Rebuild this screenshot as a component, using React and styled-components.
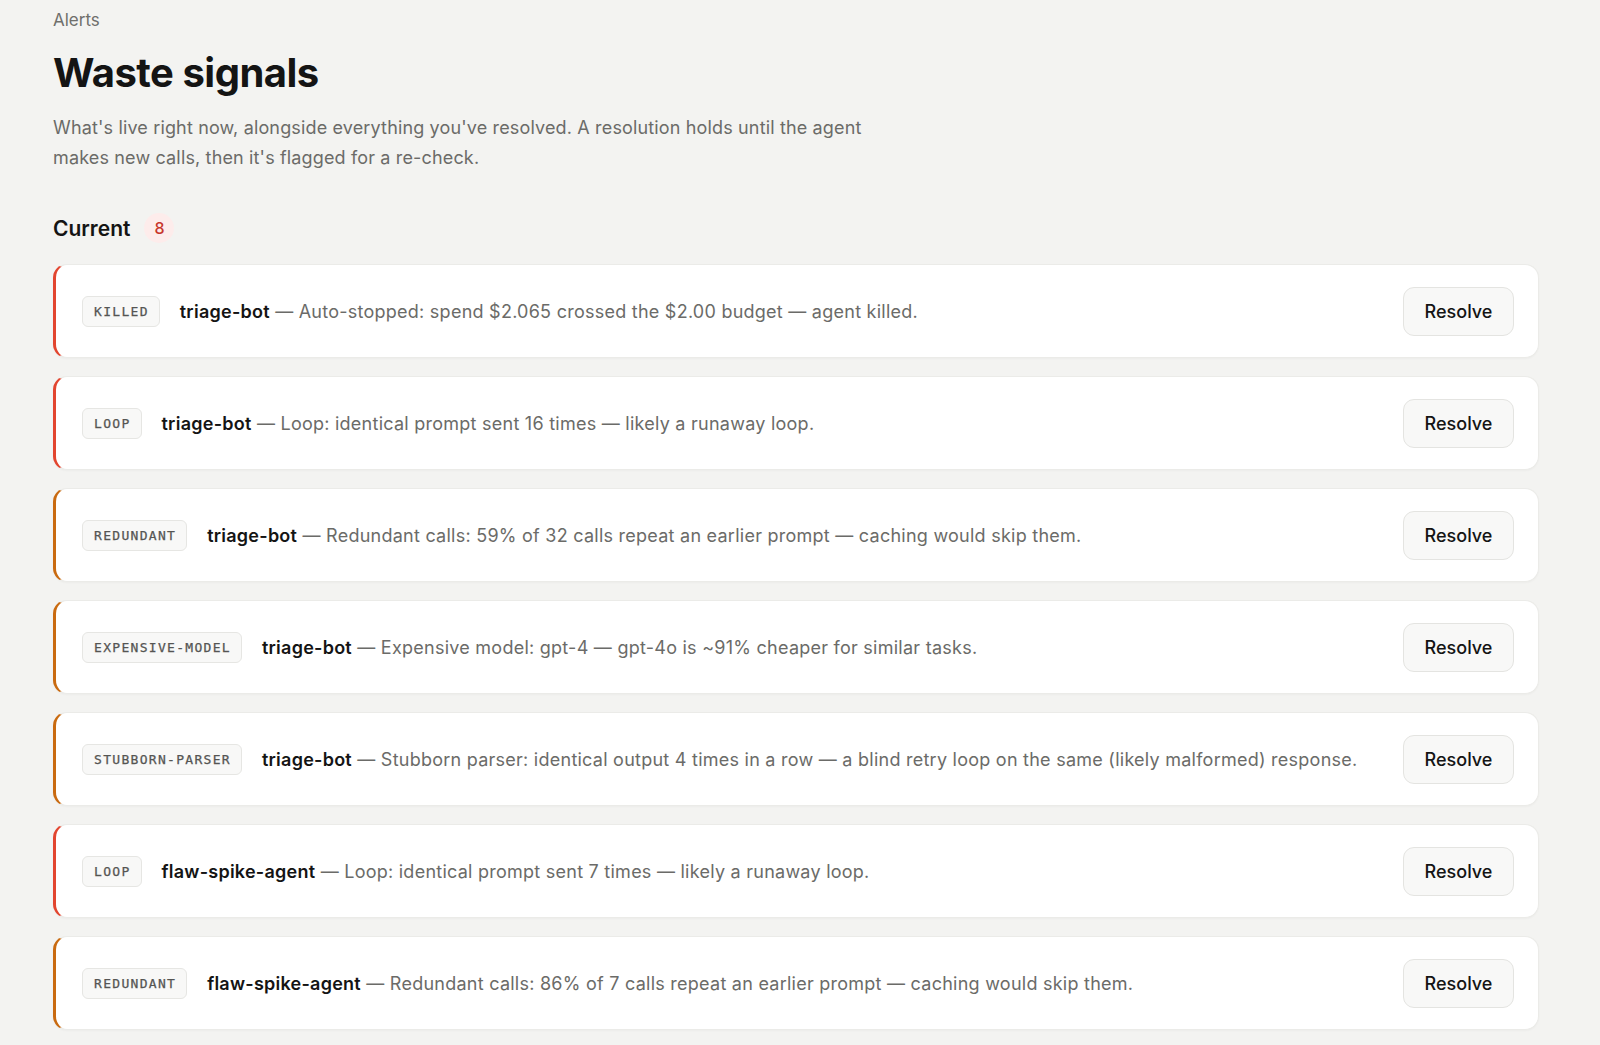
import styled, { createGlobalStyle } from "styled-components";

const GlobalStyle = createGlobalStyle`
  body {
    margin: 0;
    background: #f3f3f1;
    font-family: Inter, "Noto Sans", "Liberation Sans", sans-serif;
    color: #141414;
  }
`;

const Page = styled.main`
  padding: 8px 61px 40px 53px;
`;

const Crumb = styled.div`
  font-size: 17px;
  line-height: 24px;
  color: #6f6f6c;
`;

const Title = styled.h1`
  margin: 17px 0 0;
  font-size: 40px;
  line-height: 48px;
  font-weight: 700;
  letter-spacing: -0.5px;
  color: #141414;
`;

const Lead = styled.p`
  margin: 16px 0 0;
  max-width: 860px;
  font-size: 18px;
  line-height: 30px;
  letter-spacing: 0.15px;
  color: #6b6b68;
`;

const SectionHead = styled.div`
  display: flex;
  align-items: center;
  gap: 14px;
  margin-top: 40px;
  height: 30px;
`;

const SectionTitle = styled.h2`
  margin: 0;
  font-size: 21px;
  font-weight: 600;
  color: #141414;
`;

const Count = styled.span`
  display: inline-flex;
  align-items: center;
  justify-content: center;
  width: 30px;
  height: 30px;
  border-radius: 50%;
  background: #fdeceb;
  color: #c8362b;
  font-size: 16px;
  font-weight: 500;
`;

const List = styled.div`
  display: flex;
  flex-direction: column;
  gap: 18px;
  margin-top: 21px;
`;

const Card = styled.div`
  display: flex;
  align-items: center;
  gap: 20px;
  box-sizing: border-box;
  height: 94px;
  padding: 0 24px 0 26px;
  background: #fff;
  border: 1px solid #ebebe8;
  border-left: 3px solid ${(p) => (p.$tone === "red" ? "#e2452f" : "#c96a10")};
  border-radius: 14px;
  box-shadow: 0 1px 2px rgba(0, 0, 0, 0.03);
`;

const Tag = styled.span`
  flex: none;
  display: inline-flex;
  align-items: center;
  height: 31px;
  box-sizing: border-box;
  padding: 0 10px 0 11px;
  border: 1px solid #e6e6e3;
  border-radius: 6px;
  background: #f8f8f7;
  font-family: "DejaVu Sans Mono", "Liberation Mono", monospace;
  font-size: 13px;
  letter-spacing: 1.3px;
  color: #555553;
  -webkit-text-stroke: 0.25px #555553;
`;

const Message = styled.div`
  flex: 1;
  font-size: 18px;
  letter-spacing: 0.25px;
  color: #6b6b68;
  white-space: nowrap;
`;

const Agent = styled.span`
  font-weight: 600;
  color: #141414;
`;

const ResolveButton = styled.button`
  flex: none;
  width: 111px;
  height: 49px;
  border: 1px solid #e4e4e1;
  border-radius: 11px;
  background: #f8f8f7;
  font-family: inherit;
  font-size: 18px;
  font-weight: 500;
  color: #141414;
  cursor: pointer;
`;

const alerts = [
  { tag: "KILLED", tone: "red", agent: "triage-bot", text: "Auto-stopped: spend $2.065 crossed the $2.00 budget — agent killed." },
  { tag: "LOOP", tone: "red", agent: "triage-bot", text: "Loop: identical prompt sent 16 times — likely a runaway loop." },
  { tag: "REDUNDANT", tone: "orange", agent: "triage-bot", text: "Redundant calls: 59% of 32 calls repeat an earlier prompt — caching would skip them." },
  { tag: "EXPENSIVE-MODEL", tone: "orange", agent: "triage-bot", text: "Expensive model: gpt-4 — gpt-4o is ~91% cheaper for similar tasks." },
  { tag: "STUBBORN-PARSER", tone: "orange", agent: "triage-bot", text: "Stubborn parser: identical output 4 times in a row — a blind retry loop on the same (likely malformed) response." },
  { tag: "LOOP", tone: "red", agent: "flaw-spike-agent", text: "Loop: identical prompt sent 7 times — likely a runaway loop." },
  { tag: "REDUNDANT", tone: "orange", agent: "flaw-spike-agent", text: "Redundant calls: 86% of 7 calls repeat an earlier prompt — caching would skip them." },
];

export default function App() {
  return (
    <>
      <GlobalStyle />
      <Page>
        <Crumb>Alerts</Crumb>
        <Title>Waste signals</Title>
        <Lead>
          What's live right now, alongside everything you've resolved. A
          resolution holds until the agent makes new calls, then it's flagged
          for a re-check.
        </Lead>
        <SectionHead>
          <SectionTitle>Current</SectionTitle>
          <Count>8</Count>
        </SectionHead>
        <List>
          {alerts.map((a, i) => (
            <Card key={i} $tone={a.tone}>
              <Tag>{a.tag}</Tag>
              <Message>
                <Agent>{a.agent}</Agent> — {a.text}
              </Message>
              <ResolveButton>Resolve</ResolveButton>
            </Card>
          ))}
        </List>
      </Page>
    </>
  );
}
